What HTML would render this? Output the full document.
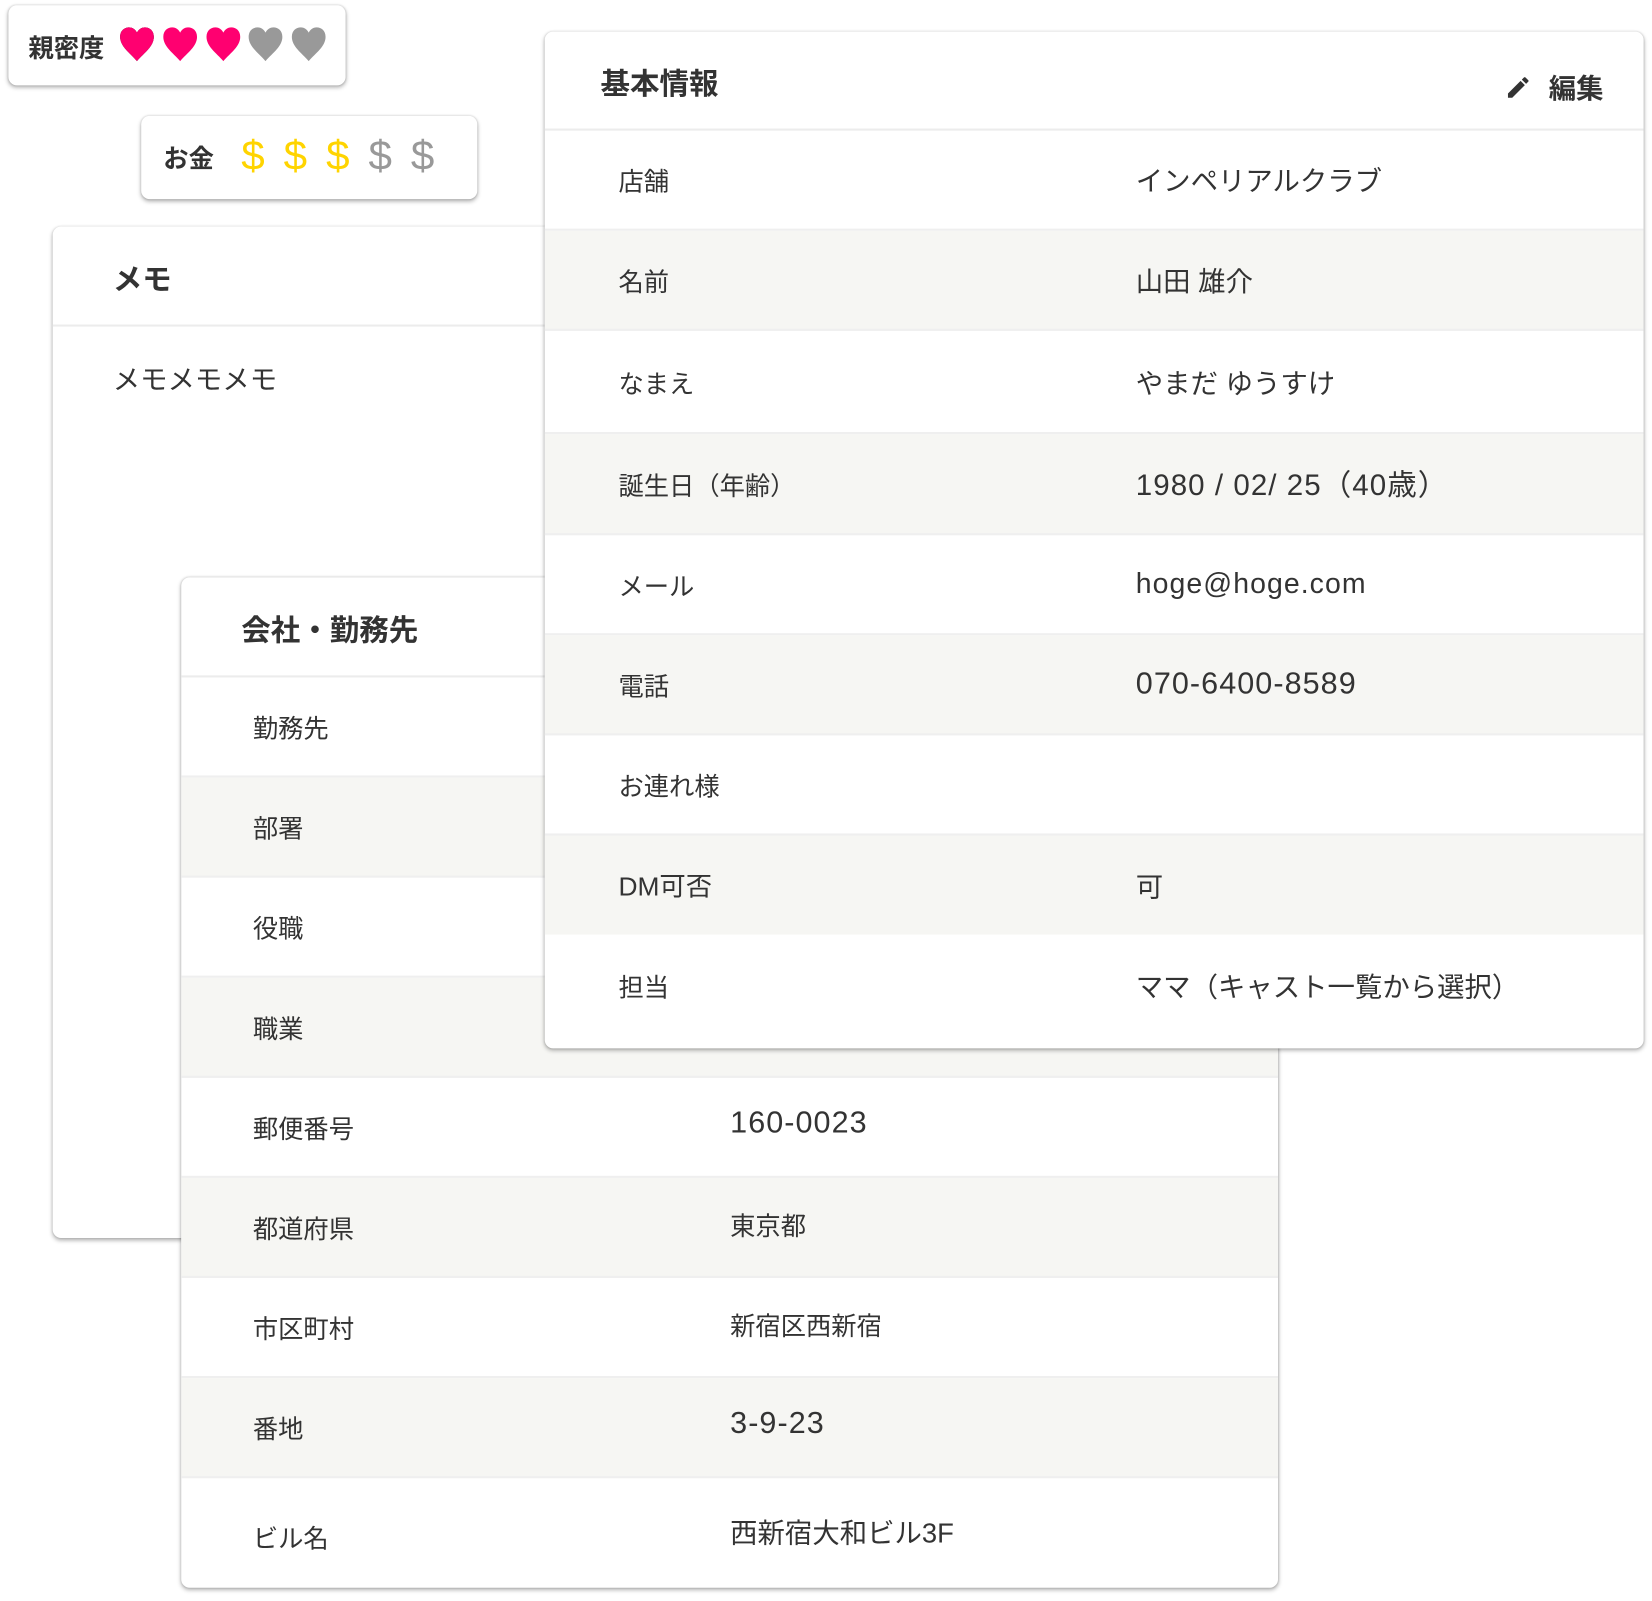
<!DOCTYPE html>
<html><head><meta charset="utf-8"><style>
*{margin:0;padding:0;box-sizing:border-box}
html,body{width:1652px;height:1600px;background:#fff;overflow:hidden}
body{font-family:"Liberation Sans","Noto Sans CJK JP",sans-serif;color:#333}
#w{position:absolute;left:0;top:0;width:1568px;height:1520px;transform:scale(1.0536);transform-origin:0 0}
.card{position:absolute;background:#fff;border-radius:8px;box-shadow:0 2px 4px rgba(0,0,0,.3),0 0 2px rgba(0,0,0,.15)}
.hd{height:95px;border-bottom:2px solid #ececec;font-weight:bold;font-size:28px;display:flex;align-items:center;padding-left:57px;padding-top:4px}
.row{height:95px;border-bottom:2px solid #efefef;display:flex;align-items:center;font-size:24px}
.row.g{background:#f6f6f3}
.row .l{position:absolute}
.num{letter-spacing:1px}
.pill{display:flex;align-items:center;font-weight:bold;font-size:24px}
</style></head><body><div id="w">

<div class="card" style="left:8px;top:5px;width:320px;height:76px">
 <div class="pill" style="position:absolute;left:19px;top:20px">親密度
 <svg width="200" height="36" viewBox="0 0 200 36" style="margin-left:14px">
 <g id="h"><path d="M17 33 C10 25 1 19 1 10 C1 4 5 1 9.5 1 C13 1 15.5 3 17 6 C18.5 3 21 1 24.5 1 C29 1 33 4 33 10 C33 19 24 25 17 33Z"/></g>
 <use href="#h" fill="#ff0070"/>
 <use href="#h" x="41" fill="#ff0070"/>
 <use href="#h" x="82" fill="#ff0070"/>
 <use href="#h" x="122" fill="#999"/>
 <use href="#h" x="163" fill="#999"/>
 </svg></div>
</div>

<div class="card" style="left:134px;top:110px;width:319px;height:79px">
 <div class="pill" style="position:absolute;left:21px;top:16px">お金
 <span style="font-weight:normal;font-size:40px;margin-left:26px;letter-spacing:18px"><span style="color:#ffd400">$$$</span><span style="color:#999">$$</span></span></div>
</div>

<div class="card" style="left:50px;top:215px;width:560px;height:960px">
 <div class="hd">メモ</div>
 <div style="padding:30px 57px;font-size:26px">メモメモメモ</div>
</div>

<div class="card" style="left:172px;top:548px;width:1041px;height:959px;overflow:hidden">
 <div class="hd">会社・勤務先</div>
 <div class="row"><span class="l" style="left:68px">勤務先</span></div>
 <div class="row g"><span class="l" style="left:68px">部署</span></div>
 <div class="row"><span class="l" style="left:68px">役職</span></div>
 <div class="row g"><span class="l" style="left:68px">職業</span></div>
 <div class="row"><span class="l" style="left:68px">郵便番号</span><span class="l num" style="left:521px;font-size:29px;margin-top:-6px">160-0023</span></div>
 <div class="row g"><span class="l" style="left:68px">都道府県</span><span class="l" style="left:521px;margin-top:-6px">東京都</span></div>
 <div class="row"><span class="l" style="left:68px">市区町村</span><span class="l" style="left:521px;margin-top:-6px">新宿区西新宿</span></div>
 <div class="row g"><span class="l" style="left:68px">番地</span><span class="l num" style="left:521px;font-size:29px;margin-top:-6px">3-9-23</span></div>
 <div class="row" style="border:0;height:110px"><span class="l" style="left:68px">ビル名</span><span class="l" style="left:521px;margin-top:-10px;font-size:26px">西新宿大和ビル3F</span></div>
</div>

<div class="card" style="left:517px;top:30px;width:1043px;height:965px;overflow:hidden">
 <div class="hd" style="height:94px;padding-left:53px">基本情報
  <span style="position:absolute;right:38px;top:34px;display:flex;align-items:center;font-size:26px">
  <svg width="26" height="26" viewBox="0 0 24 24" style="margin-right:16px"><path fill="#333" d="M3 17.25V21h3.75L17.81 9.94l-3.75-3.75L3 17.25zM20.71 7.04a1 1 0 0 0 0-1.41l-2.34-2.34a1 1 0 0 0-1.41 0l-1.83 1.83 3.75 3.75 1.83-1.83z"/></svg>編集</span></div>
 <div class="row"><span class="l" style="left:70px">店舗</span><span class="l" style="left:561px;font-size:26px">インペリアルクラブ</span></div>
 <div class="row g"><span class="l" style="left:70px">名前</span><span class="l" style="left:561px;font-size:26px">山田 雄介</span></div>
 <div class="row" style="height:98px"><span class="l" style="left:70px">なまえ</span><span class="l" style="left:561px;font-size:26px">やまだ ゆうすけ</span></div>
 <div class="row g" style="height:96px"><span class="l" style="left:70px">誕生日（年齢）</span><span class="l num" style="left:561px;font-size:28px">1980 / 02/ 25（40歳）</span></div>
 <div class="row"><span class="l" style="left:70px">メール</span><span class="l num" style="left:561px;font-size:27px">hoge@hoge.com</span></div>
 <div class="row g"><span class="l" style="left:70px">電話</span><span class="l num" style="left:561px;font-size:29px">070-6400-8589</span></div>
 <div class="row"><span class="l" style="left:70px">お連れ様</span></div>
 <div class="row g" style="height:94px;border:0"><span class="l" style="left:70px;font-size:25px">DM可否</span><span class="l" style="left:561px;font-size:26px">可</span></div>
 <div class="row" style="border:0;height:108px"><span class="l" style="left:70px;margin-top:-12px">担当</span><span class="l" style="left:561px;font-size:26px;margin-top:-12px">ママ（キャスト一覧から選択）</span></div>
</div>

</div></body></html>
